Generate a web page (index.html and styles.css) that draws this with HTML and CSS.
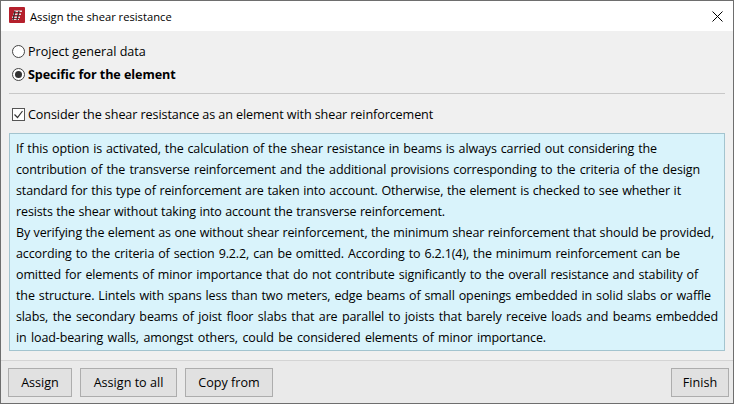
FILE: index.html
```html
<!DOCTYPE html>
<html lang="en">
<head>
<meta charset="utf-8">
<title>Assign the shear resistance</title>
<link rel="stylesheet" href="styles.css">
</head>
<body>
<div class="window">
  <header class="titlebar">
    <svg class="app-icon" width="16" height="16" viewBox="0 0 16 16">
      <rect width="16" height="16" rx="1" fill="#b5202c"/>
      <path d="M5 3.500h8v1.500H5zM4 6.500h8V8H4zM3 9.500h8V11H3zM3 12h7v1H3z" fill="#e8e4e4"/>
      <path d="M6 4L4 13M10 4L8 13" stroke="#3a2a2c" stroke-width="1.300" fill="none"/>
    </svg>
    <span class="title">Assign the shear resistance</span>
    <svg class="close" width="11" height="11" viewBox="0 0 11 11">
      <path d="M.5.500l10 10M10.500.500l-10 10" stroke="#000" stroke-width="1" fill="none"/>
    </svg>
  </header>
  <main class="content">
    <div class="option"><span class="radio"></span><span>Project general data</span></div>
    <div class="option selected"><span class="radio on"></span><span>Specific for the element</span></div>
    <hr class="rule">
    <div class="check-row">
      <svg class="check" width="13" height="13" viewBox="0 0 13 13">
        <rect x=".5" y=".5" width="12" height="12" fill="#fff" stroke="#555"/>
        <path d="M2.500 6.500l3 3 5-6.500" stroke="#333" stroke-width="1.200" fill="none"/>
      </svg>
      <span>Consider the shear resistance as an element with shear reinforcement</span>
    </div>
    <div class="info">
      <div class="line l1">If this option is activated, the calculation of the shear resistance in beams is always carried out considering the</div>
      <div class="line l2">contribution of the transverse reinforcement and the additional provisions corresponding to the criteria of the design</div>
      <div class="line l3">standard for this type of reinforcement are taken into account. Otherwise, the element is checked to see whether it</div>
      <div class="line l4">resists the shear without taking into account the transverse reinforcement.</div>
      <div class="line l5">By verifying the element as one without shear reinforcement, the minimum shear reinforcement that should be provided,</div>
      <div class="line l6">according to the criteria of section 9.2.2, can be omitted. According to 6.2.1(4), the minimum reinforcement can be</div>
      <div class="line l7">omitted for elements of minor importance that do not contribute significantly to the overall resistance and stability of</div>
      <div class="line l8">the structure. Lintels with spans less than two meters, edge beams of small openings embedded in solid slabs or waffle</div>
      <div class="line l9">slabs, the secondary beams of joist floor slabs that are parallel to joists that barely receive loads and beams embedded</div>
      <div class="line l10">in load-bearing walls, amongst others, could be considered elements of minor importance.</div>
    </div>
  </main>
  <footer class="footer">
    <button class="btn btn-assign">Assign</button>
    <button class="btn btn-all">Assign to all</button>
    <button class="btn btn-copy">Copy from</button>
    <button class="btn btn-finish">Finish</button>
  </footer>
</div>
</body>
</html>
```
FILE: styles.css
```css
* { box-sizing: border-box; }
html, body { margin: 0; padding: 0; }
body { width: 734px; height: 404px; overflow: hidden; font-family: "Open Sans", "Noto Sans", sans-serif; font-size: 12.6px; color: #000; }
.window { width: 734px; height: 404px; border: 1px solid #6e6e6e; background: #f0f0f0; display: flex; flex-direction: column; }
.titlebar { height: 30px; background: #fff; display: flex; align-items: center; padding: 0 10px 0 8px; flex: none; }
.app-icon { flex: none; margin-bottom: 2px; }
.title { margin-left: 5px; font-size: 11.2px; flex: 1; }
.close { flex: none; }
.content { flex: 1; padding: 9px 8px 0; display: flex; flex-direction: column; }
.option { height: 23px; display: flex; align-items: center; gap: 3px; padding-left: 3px; }
.selected { font-weight: 700; letter-spacing: -0.08px; }
.radio { width: 13px; height: 13px; border-radius: 50%; border: 1px solid #444; background: #fff; flex: none; position: relative; }
.radio.on::after { content: ""; position: absolute; inset: 2px; border-radius: 50%; background: #333; }
.rule { margin: 7px 0 0; border: 0; border-top: 1px solid #c8c8c8; width: 716px; }
.check-row { height: 39px; display: flex; align-items: center; gap: 3px; padding: 1px 0 0 3px; letter-spacing: -0.1px; }
.check { flex: none; }
.info { height: 218px; width: 716px; background: #d9f3fb; border: 1px solid #a3c4cf; padding: 4px 6px; }
.line { height: 21px; line-height: 21px; white-space: nowrap; font-size: 12.5px; letter-spacing: -0.12px; text-align: justify; text-align-last: justify; }
.l1 { width: 641px; }
.l2 { width: 684px; }
.l3 { width: 665px; }
.l4 { width: 429px; }
.l5 { width: 698px; }
.l6 { width: 664px; }
.l7 { width: 682px; }
.l8 { width: 695px; }
.l9 { width: 702px; }
.l10 { width: 530px; }
.footer { height: 43px; flex: none; background: #eaeaea; border-top: 1px solid #d4d4d4; display: flex; align-items: flex-start; gap: 8px; padding: 7px 4px 0 7px; }
.btn { height: 29px; font: inherit; background: #e1e1e1; border: 1px solid #adadad; padding: 0; color: #000; }
.btn-assign { width: 64px; }
.btn-all { width: 97px; }
.btn-copy { width: 88px; }
.btn-finish { width: 58px; margin-left: auto; }
```
